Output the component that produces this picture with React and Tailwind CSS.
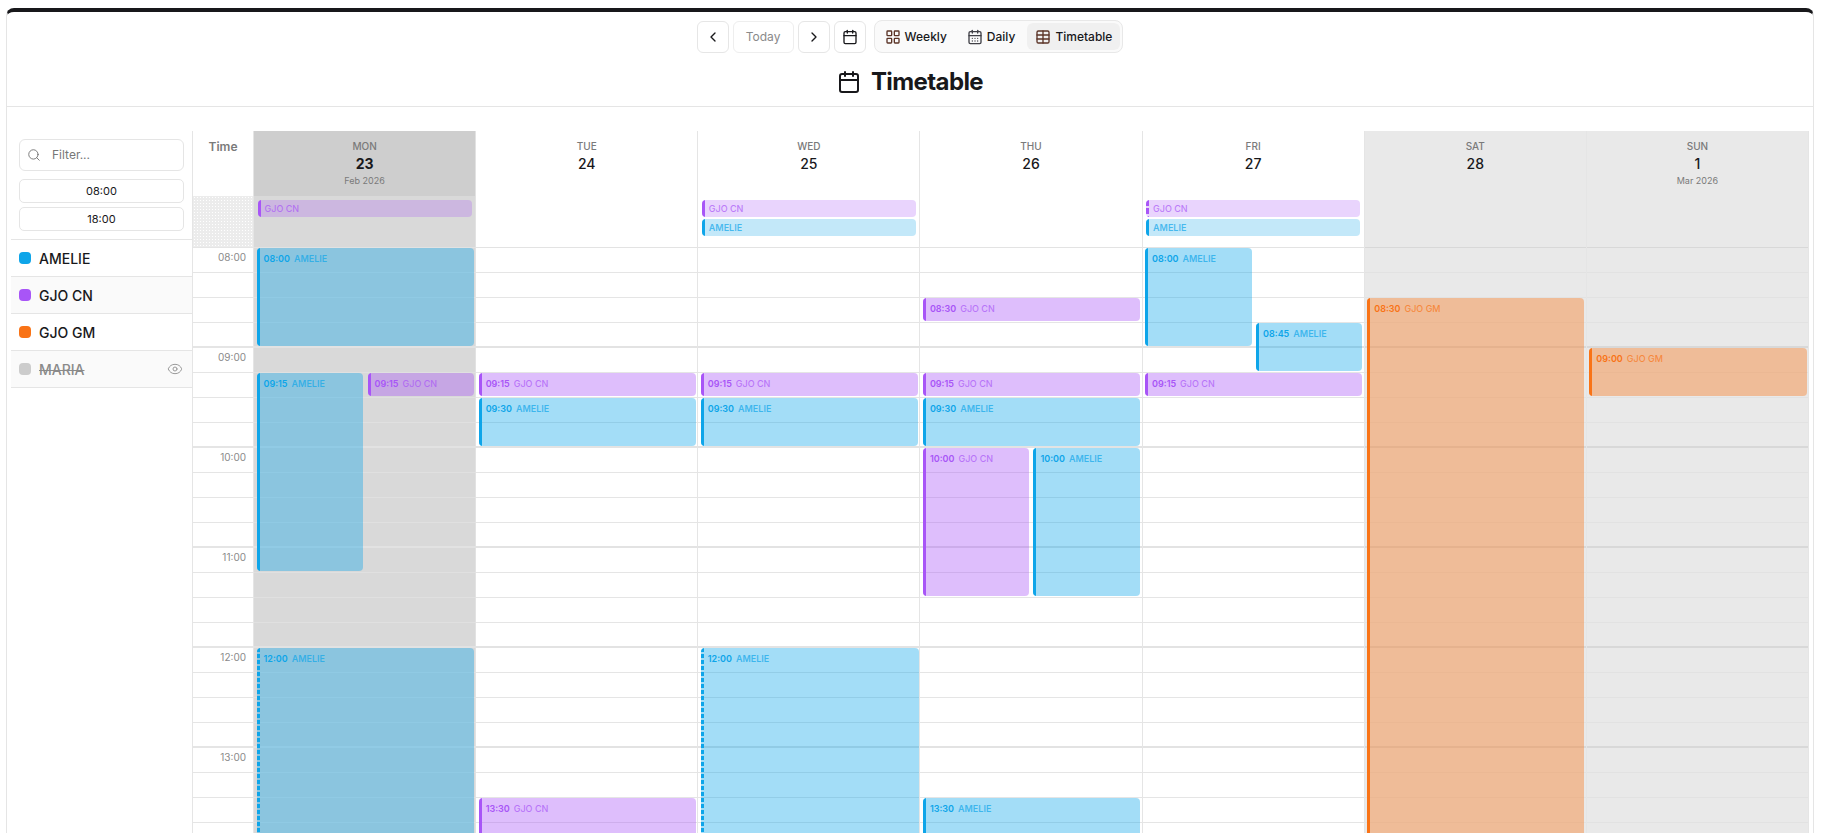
import React from "react";
import { ChevronLeft, ChevronRight, Calendar, CalendarDays, LayoutGrid, Table, Search, Eye } from "lucide-react";

const TONES = {
  sky: { bar: "bg-[#0ea5e9]", fill: "bg-[#0ea5e9]/[0.38]", chip: "bg-[#0ea5e9]/25", time: "text-[#0ea5e9]", name: "text-[#0ea5e9]/70", dash: "bg-[repeating-linear-gradient(to_bottom,#0ea5e9_0_4px,transparent_4px_6px)]" },
  purple: { bar: "bg-[#a855f7]", fill: "bg-[#a855f7]/[0.38]", chip: "bg-[#a855f7]/25", time: "text-[#a855f7]", name: "text-[#a855f7]/70", dash: "bg-[repeating-linear-gradient(to_bottom,#a855f7_0_6px,transparent_6px_8px)]" },
  orange: { bar: "bg-[#f97316]", fill: "bg-[#f97316]/[0.38]", chip: "bg-[#f97316]/25", time: "text-[#f97316]", name: "text-[#f97316]/70", dash: "" },
};

const L = 2.5;
const R = 1.5;

const DAYS = [
  { dow: "MON", num: "23", sub: "Feb 2026", kind: "today",
    chips: [{ t: "purple", n: "GJO CN" }],
    events: [
      { s: 0, h: 98, t: "sky", time: "08:00", n: "AMELIE", l: L, r: R },
      { s: 75, h: 198, t: "sky", time: "09:15", n: "AMELIE", l: L, r: 112 },
      { s: 75, h: 23, t: "purple", time: "09:15", n: "GJO CN", l: 113.5, r: R },
      { s: 240, h: 300, t: "sky", time: "12:00", n: "AMELIE", l: L, r: R, dashed: true },
    ] },
  { dow: "TUE", num: "24",
    chips: [],
    events: [
      { s: 75, h: 23, t: "purple", time: "09:15", n: "GJO CN", l: L, r: R },
      { s: 90, h: 48, t: "sky", time: "09:30", n: "AMELIE", l: L, r: R },
      { s: 330, h: 200, t: "purple", time: "13:30", n: "GJO CN", l: L, r: R },
    ] },
  { dow: "WED", num: "25",
    chips: [{ t: "purple", n: "GJO CN" }, { t: "sky", n: "AMELIE", bold: true }],
    events: [
      { s: 75, h: 23, t: "purple", time: "09:15", n: "GJO CN", l: L, r: R },
      { s: 90, h: 48, t: "sky", time: "09:30", n: "AMELIE", l: L, r: R },
      { s: 240, h: 300, t: "sky", time: "12:00", n: "AMELIE", l: L, r: 0.5, dashed: true },
    ] },
  { dow: "THU", num: "26",
    chips: [],
    events: [
      { s: 30, h: 23, t: "purple", time: "08:30", n: "GJO CN", l: L, r: R },
      { s: 75, h: 23, t: "purple", time: "09:15", n: "GJO CN", l: L, r: R },
      { s: 90, h: 48, t: "sky", time: "09:30", n: "AMELIE", l: L, r: R },
      { s: 120, h: 148, t: "purple", time: "10:00", n: "GJO CN", l: L, r: 113 },
      { s: 120, h: 148, t: "sky", time: "10:00", n: "AMELIE", l: 113, r: R },
      { s: 330, h: 200, t: "sky", time: "13:30", n: "AMELIE", l: L, r: R },
    ] },
  { dow: "FRI", num: "27",
    chips: [{ t: "purple", n: "GJO CN", dashed: true }, { t: "sky", n: "AMELIE", bold: true }],
    events: [
      { s: 0, h: 98, t: "sky", time: "08:00", n: "AMELIE", l: L, r: 112 },
      { s: 45, h: 48, t: "sky", time: "08:45", n: "AMELIE", l: 113.5, r: R },
      { s: 75, h: 23, t: "purple", time: "09:15", n: "GJO CN", l: L, r: R },
    ] },
  { dow: "SAT", num: "28", kind: "weekend",
    chips: [],
    events: [{ s: 30, h: 600, t: "orange", time: "08:30", n: "GJO GM", l: L, r: R }] },
  { dow: "SUN", num: "1", sub: "Mar 2026", kind: "weekend",
    chips: [],
    events: [{ s: 60, h: 48, t: "orange", time: "09:00", n: "GJO GM", l: L, r: 1 }] },
];

const QUARTERS = Array.from({ length: 24 }, (_, i) => i);
const HOURS = ["08:00", "09:00", "10:00", "11:00", "12:00", "13:00"];

function Toolbar() {
  const btn = "flex h-8 w-8 items-center justify-center rounded-md border border-[#e6e6e6] bg-white text-[#18181b]";
  const tab = "flex h-[27px] items-center gap-1 rounded-md px-2";
  return (
    <div className="flex items-center justify-center">
      <button className={btn}><ChevronLeft size={16} strokeWidth={2} /></button>
      <button className="ml-1 flex h-8 w-[61px] items-center justify-center rounded-md border border-[#eeeeee] bg-white text-[12px] font-normal text-[#8a8a8a]">Today</button>
      <button className={`${btn} ml-1`}><ChevronRight size={16} strokeWidth={2} /></button>
      <button className={`${btn} ml-1`}><Calendar size={16} strokeWidth={2} /></button>
      <div className="ml-2 flex h-[33px] items-center gap-1 rounded-lg border border-[#e8e8e8] bg-[#fafafa] p-[2px] text-[12px] font-medium text-[#18181b]">
        <div className={tab}><LayoutGrid size={16} strokeWidth={2} className="text-[#5b3427]" />Weekly</div>
        <div className={tab}><CalendarDays size={16} strokeWidth={2} className="text-[#3f3f46]" />Daily</div>
        <div className={`${tab} bg-[#f0f0f0]`}><Table size={16} strokeWidth={2} className="text-[#5b3427]" />Timetable</div>
      </div>
    </div>
  );
}

function Sidebar() {
  const rows = [
    { n: "AMELIE", c: "bg-[#0ea5e9]" },
    { n: "GJO CN", c: "bg-[#a855f7]", alt: true },
    { n: "GJO GM", c: "bg-[#f97316]" },
    { n: "MARIA", c: "bg-[#cccccc]", alt: true, off: true },
  ];
  return (
    <aside className="w-[181px] shrink-0">
      <div className="px-2 pb-2 pt-2">
        <div className="flex h-8 items-center rounded-md border border-[#e5e5e5] pl-[7px] text-[12px] text-[#777777]">
          <Search size={14} strokeWidth={1.5} className="text-[#6b6b6b]" />
          <span className="ml-[11px]">Filter...</span>
        </div>
        <div className="mt-2 flex h-6 items-center justify-center rounded-[5px] border border-[#e5e5e5] text-[11px] text-[#18181b]">08:00</div>
        <div className="mt-1 flex h-6 items-center justify-center rounded-[5px] border border-[#e5e5e5] text-[11px] text-[#18181b]">18:00</div>
      </div>
      <div className="border-t border-[#e5e5e5]">
        {rows.map((r) => (
          <div key={r.n} className={`flex h-[37px] items-center border-b border-[#e5e5e5] pl-2 pr-[9px] ${r.alt ? "bg-[#fafafa]" : "bg-white"}`}>
            <span className={`h-3 w-3 rounded-[4px] ${r.c}`} />
            <span className={`ml-2 flex-1 text-[14px] font-medium ${r.off ? "text-[#8a8a8a] line-through" : "text-[#18181b]"}`}>{r.n}</span>
            {r.off && <Eye size={16} strokeWidth={1.5} className="text-[#9a9a9a]" />}
          </div>
        ))}
      </div>
    </aside>
  );
}

function EventBlock({ e }) {
  const tone = TONES[e.t];
  return (
    <div
      className={`absolute flex overflow-hidden rounded-[4px] ${tone.fill}`}
      style={{ top: (e.s / 15) * 25, height: e.h, left: e.l, right: e.r }}
    >
      <div className={`w-[3px] shrink-0 ${e.dashed ? tone.dash : tone.bar}`} />
      <div className="flex h-5 items-center gap-[4px] pl-1 leading-none">
        <span className={`text-[9px] font-semibold ${tone.time}`}>{e.time}</span>
        <span className={`text-[9px] ${e.n === "AMELIE" ? "font-semibold" : "font-medium"} ${tone.name}`}>{e.n}</span>
      </div>
    </div>
  );
}

function DayColumn({ d }) {
  const head = d.kind === "today" ? "bg-[#cecece]" : d.kind === "weekend" ? "bg-[#e9e9e9]" : "bg-white";
  const body = d.kind === "today" ? "bg-[#d9d9d9]" : d.kind === "weekend" ? "bg-[#e9e9e9]" : "bg-white";
  const line = d.kind === "today" ? "border-[#e0e0e0]" : d.kind === "weekend" ? "border-[#e2e2e2]" : "border-[#e5e5e5]";
  const hourLine = d.kind === "today" ? "border-[#e2e2e2]" : d.kind === "weekend" ? "border-[#d8d8d8]" : "border-[#e3e3e3]";
  const rule = d.kind === "today" ? "border-[#e2e2e2]" : "border-[#e5e5e5]";
  return (
    <div className={`min-w-0 flex-1 border-r ${rule}`}>
      <div className={`flex h-[65px] flex-col items-center pt-[9px] ${head}`}>
        <span className="text-[10px] font-medium leading-[12px] text-[#7a7a7a]">{d.dow}</span>
        <span className={`mt-[2px] text-[14px] leading-[20px] text-[#18181b] ${d.kind === "today" ? "font-bold" : "font-medium"}`}>{d.num}</span>
        {d.sub && <span className="mt-[1px] text-[9px] leading-[12px] text-[#7a7a7a]">{d.sub}</span>}
      </div>
      <div className={`flex h-[52px] flex-col gap-[2px] border-b px-[3.5px] pt-[4px] ${hourLine} ${body}`}>
        {d.chips.map((c) => {
          const tone = TONES[c.t];
          return (
            <div key={c.n} className={`flex h-[17px] shrink-0 overflow-hidden rounded-[4px] ${tone.chip}`}>
              <div className={`w-[3px] shrink-0 ${c.dashed ? tone.dash : tone.bar}`} />
              <span className={`flex items-center pl-1 text-[9px] ${c.bold ? "font-semibold" : "font-medium"} ${tone.name}`}>{c.n}</span>
            </div>
          );
        })}
      </div>
      <div className={`relative ${body}`}>
        {QUARTERS.map((q) => (
          <div key={q} className={`h-[25px] ${q % 4 === 3 ? `border-b-2 ${hourLine}` : `border-b ${line}`}`} />
        ))}
        {d.events.map((e) => <EventBlock key={`${e.s}-${e.n}`} e={e} />)}
      </div>
    </div>
  );
}

function TimeColumn() {
  return (
    <div className="w-[62px] shrink-0 border-x border-[#e5e5e5]">
      <div className="flex h-[65px] justify-center pt-[9px]">
        <span className="text-[12px] font-semibold leading-[14px] text-[#7a7a7a]">Time</span>
      </div>
      <div className="h-[52px] border-b border-[#e5e5e5] bg-[#ececec] bg-[radial-gradient(#ffffff_0.8px,transparent_0.8px)] bg-[size:3px_3px]" />
      {HOURS.map((h) => (
        <div key={h}>
          <div className="h-[25px] border-b border-[#e5e5e5] pr-[7px] pt-[2px] text-right text-[10px] leading-[14px] text-[#8a8a8a]">{h}</div>
          <div className="h-[25px] border-b border-[#e5e5e5]" />
          <div className="h-[25px] border-b border-[#e5e5e5]" />
          <div className="h-[25px] border-b-2 border-[#e5e5e5]" />
        </div>
      ))}
    </div>
  );
}

export default function App() {
  return (
    <div className="h-screen overflow-hidden bg-white pl-[6px] pr-[7px] pt-2 font-['Inter',sans-serif]">
      <div className="flex h-[calc(100%+4px)] flex-col rounded-t-lg border border-t-4 border-[#e5e5e5] border-t-[#18181b] bg-white">
        <header className="h-[95px] shrink-0 border-b border-[#e5e5e5] pt-2">
          <Toolbar />
          <div className="mt-[13px] flex items-center justify-center gap-[10px]">
            <Calendar size={24} strokeWidth={2} className="text-[#18181b]" />
            <h1 className="text-[24px] font-bold leading-[32px] tracking-tight text-[#18181b]">Timetable</h1>
          </div>
        </header>
        <main className="flex min-h-0 flex-1 overflow-hidden pl-1 pr-1 pt-6">
          <Sidebar />
          <TimeColumn />
          <div className="flex min-w-0 flex-1">
            {DAYS.map((d) => <DayColumn key={d.dow} d={d} />)}
          </div>
        </main>
      </div>
    </div>
  );
}
